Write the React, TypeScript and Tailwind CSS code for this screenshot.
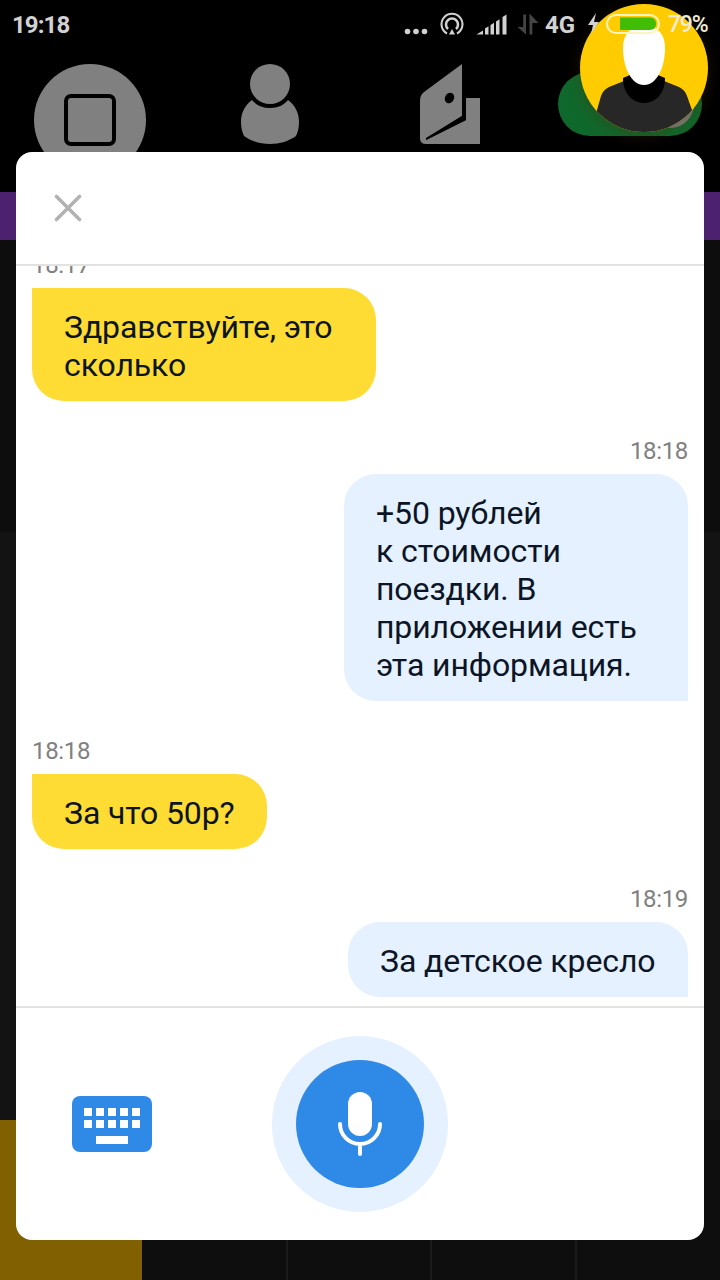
import React from "react";

type Message = {
  time: string;
  text: string;
  mine?: boolean;
  width: string;
};

const messages: Message[] = [
  { time: "18:17", text: "Здравствуйте, это\nсколько", width: "w-[344px]" },
  {
    time: "18:18",
    text: "+50 рублей\nк стоимости\nпоездки. В\nприложении есть\nэта информация.",
    mine: true,
    width: "w-[344px]",
  },
  { time: "18:18", text: "За что 50р?", width: "w-[235px]" },
  { time: "18:19", text: "За детское кресло", mine: true, width: "w-[340px]" },
];

/**
 * System status bar, drawn on top of everything
 */
const StatusBar = () => (
  <div className="absolute inset-x-0 top-0 flex h-12 items-center pt-0.5 pl-3 text-[#d2d2d2]">
    <div className="w-[392px] text-[24px] leading-[48px] font-bold tracking-[-0.9px]">19:18</div>
    <svg className="-mt-0.5 h-12 w-[130px]" viewBox="404 0 130 48" overflow="visible" fill="#d2d2d2">
      <circle cx="407.500" cy="31.500" r="2.800" />
      <circle cx="416" cy="31.500" r="2.800" />
      <circle cx="424.500" cy="31.500" r="2.800" />
      <g fill="none" stroke="#d2d2d2" strokeWidth="2">
        <path d="M447 33.500A10.500 10.500 0 1 1 457 33.500" />
        <path d="M448 29A6 6 0 1 1 456 29" strokeWidth="2.500" />
      </g>
      <path d="M452 29l3 5.500h-6z" />
      <path d="M476.500 34.500l6.500-4v4zM485 28.500l3.500-2.200v8.200H485zM490.500 25l3.500-2.200v11.700h-3.500zM496 21.500l3.500-2.200v15.200H496zM502.500 17l4-2.500v20h-4z" />
      <path d="M523.200 14.500h2.800v20L517.500 27h5.700zM529.500 34.500V13.500l9 9.500h-6.200v11.500z" fill="#444" />
    </svg>
    <div className="w-[42px] pl-[11px] text-[24px] leading-[48px] font-bold">4G</div>
    <svg className="-mt-0.5 ml-[9px] h-12 w-[76px] shrink-0" viewBox="585 0 76 48">
      <path d="M596 13l-8 12h5l-2 9 8-12h-5z" fill="#d2d2d2" />
      <rect x="607" y="15" width="52" height="18" rx="9" fill="none" stroke="#fff3c0" strokeWidth="2" />
      <path d="M620 17.500h30a6.200 6.200 0 0 1 0 12.500h-30z" fill="#42bd05" />
    </svg>
    <div className="ml-[7px] text-[23px] leading-[48px] font-medium tracking-[-1.200px] text-[#f0ead8]">79%</div>
  </div>
);

const TopTabs = () => (
  <div className="grid h-48 grid-cols-4 justify-items-center bg-black pt-16">
    <svg className="h-28 w-28" viewBox="0 0 112 112">
      <circle cx="56" cy="56" r="56" fill="#808080" />
      <rect x="32" y="32" width="48" height="48" rx="5" fill="none" stroke="#000" strokeWidth="4" />
    </svg>
    <svg className="h-20 w-[60px]" viewBox="0 0 60 80" fill="#808080">
      <circle cx="30" cy="20" r="20" />
      <path d="M12 36C4 42 1 50 1 58c0 5 1 10 3 14 7 5 16 8 26 8s19-3 26-8c2-4 3-9 3-14 0-8-3-16-11-22-4 5-10 8-18 8s-14-3-18-8z" />
    </svg>
    <svg className="h-20 w-[60px]" viewBox="0 0 60 80">
      <path d="M0 37Q0 31 4 28L42 0V52L6 74v2L46 56V34H60V80H6Q0 80 0 74z" fill="#808080" />
      <path d="M42 52L6 74.500v1.500L46 56V34H42z" fill="#000" />
      <ellipse cx="29.500" cy="34" rx="4.500" ry="5.500" transform="rotate(30 29.500 34)" />
    </svg>
    <div className="mt-2 flex h-16 w-36 items-center justify-end rounded-full bg-[#10692c] pr-2">
      <div className="h-12 w-12 rounded-full bg-[#808080]" />
    </div>
  </div>
);

/**
 * Floating chat head
 */
const ChatHead = () => (
  <div className="absolute top-1 left-[580px] h-32 w-32 overflow-hidden rounded-full bg-[#ffcc02] shadow-[0_4px_16px_rgba(70,50,15,0.4)]">
    <svg viewBox="0 0 128 128">
      <path d="M17 128V106L21 92Q23 86 29 83L44 77H84L99 83Q105 86 107 92L112 106V128z" fill="#272727" />
      <path d="M43 74L50 71H78L85 74C85 90 75 99 64 99S43 90 43 74z" fill="#000" />
      <path d="M64 22C50 22 43 30 43 44C43 63 51 81 64 81S85 63 85 44C85 30 78 22 64 22z" fill="#fff" />
    </svg>
  </div>
);

const Bubble = ({ time, text, mine, width }: Message) => (
  <div className={`mb-9 flex flex-col ${mine ? "items-end" : "items-start"}`}>
    <div className="mb-[9px] text-[24px] leading-7 tracking-[-0.350px] text-[#808080]">{time}</div>
    <div
      className={`${width} px-8 pt-5 pb-[17px] text-[32px] leading-[38px] tracking-[-0.100px] whitespace-pre text-[#0b1526] ${
        mine ? "rounded-[32px] rounded-br-none bg-[#e5f1ff]" : "rounded-[32px] rounded-tl-none bg-[#ffdc33]"
      }`}
    >
      {text}
    </div>
  </div>
);

const KeyboardIcon = () => (
  <svg className="h-14 w-20" viewBox="0 0 80 56">
    <rect width="80" height="56" rx="8" fill="#2f8ae7" />
    {[12, 24, 36, 48, 60].map(x => (
      <g key={x} fill="#fff">
        <rect x={x} y="12" width="8" height="8" />
        <rect x={x} y="24" width="8" height="8" />
      </g>
    ))}
    <rect x="24" y="40" width="32" height="8" fill="#fff" />
  </svg>
);

const ChatDialog = () => (
  <div className="absolute top-[152px] left-4 flex h-[1088px] w-[688px] flex-col overflow-hidden rounded-2xl bg-white">
    <div className="flex h-[114px] shrink-0 items-center border-b-2 border-[#e2e2e2] pl-[38px]">
      <button aria-label="Закрыть">
        <svg className="h-7 w-7" viewBox="0 0 28 28" stroke="#b2b2b2" strokeWidth="3.600" strokeLinecap="round">
          <path d="M2.500 2.500l23 23M25.500 2.500l-23 23" />
        </svg>
      </button>
    </div>
    {/* the list is scrolled, so the first time label slides under the header */}
    <div className="min-h-0 flex-1 overflow-hidden px-4">
      <div className="-mt-[15px]">
        {messages.map((m, i) => (
          <Bubble key={i} {...m} />
        ))}
      </div>
    </div>
    <div className="flex h-[234px] shrink-0 items-center border-t-2 border-[#e2e2e2] pl-14">
      <button aria-label="Клавиатура">
        <KeyboardIcon />
      </button>
      <button
        aria-label="Микрофон"
        className="ml-[120px] flex h-44 w-44 items-center justify-center rounded-full bg-[#e5f1ff]"
      >
        <span className="flex h-32 w-32 items-center justify-center rounded-full bg-[#2f8ae7]">
          <svg className="h-16 w-11" viewBox="0 0 44 64">
            <rect x="10" y="0" width="24" height="44" rx="12" fill="#fff" />
            <path d="M2 32a20 20 0 0 0 40 0M22 52v10" fill="none" stroke="#fff" strokeWidth="4" strokeLinecap="round" />
          </svg>
        </span>
      </button>
    </div>
  </div>
);

export default function App() {
  return (
    <div className="relative flex h-[1280px] w-[720px] flex-col overflow-hidden bg-[#0e0e0e] font-['Roboto',sans-serif]">
      <TopTabs />
      <div className="h-12 bg-[#4c2170]" />
      <div className="h-[292px] bg-[#0d0d0d]" />
      <div className="h-[588px] bg-[#131313]" />
      <div className="flex h-40">
        <div className="w-[142px] bg-[#806000]" />
        <div className="w-[146px] border-r-2 border-[#1b1b1b]" />
        <div className="w-36 border-r-2 border-[#1b1b1b]" />
        <div className="w-[145px] border-r-2 border-[#1b1b1b]" />
      </div>
      <ChatDialog />
      <ChatHead />
      <StatusBar />
    </div>
  );
}
